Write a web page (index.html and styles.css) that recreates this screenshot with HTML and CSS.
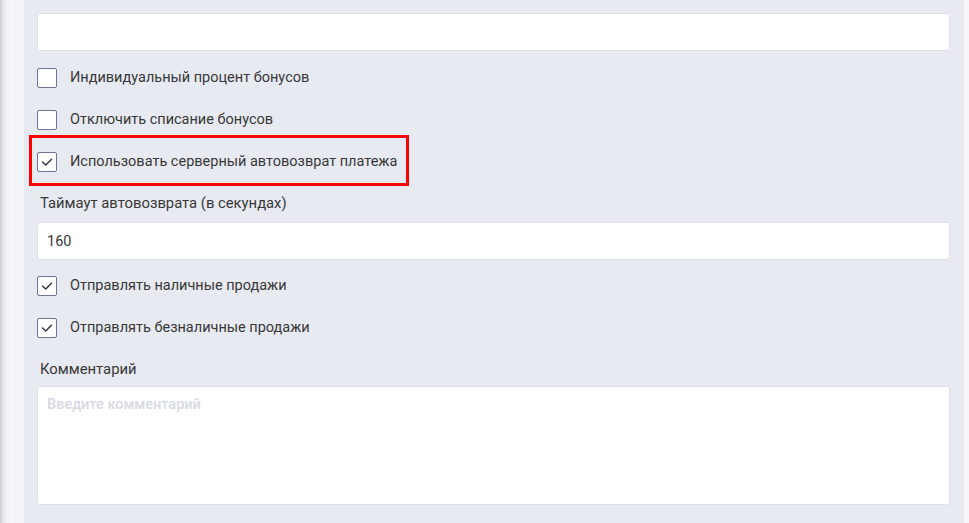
FILE: index.html
```html
<!DOCTYPE html>
<html lang="ru">
<head>
<meta charset="utf-8">
<link rel="stylesheet" href="styles.css">
</head>
<body>
<div class="page">
  <aside class="side"></aside>
  <main class="panel">
    <form class="form">
      <label class="field-label first">Процент бонусов</label>
      <div class="input"></div>

      <div class="check-row">
        <span class="box"></span>
        <span class="check-text">Индивидуальный процент бонусов</span>
      </div>
      <div class="check-row">
        <span class="box"></span>
        <span class="check-text">Отключить списание бонусов</span>
      </div>
      <div class="check-row highlighted">
        <span class="box checked"><svg viewBox="0 0 20 20"><path d="M5 10 L8.6 13.3 L15 7"/></svg></span>
        <span class="check-text">Использовать серверный автовозврат платежа</span>
        <span class="highlight"></span>
      </div>

      <label class="field-label timeout">Таймаут автовозврата (в секундах)</label>
      <div class="input"><span class="value">160</span></div>

      <div class="check-row after-input">
        <span class="box checked"><svg viewBox="0 0 20 20"><path d="M5 10 L8.6 13.3 L15 7"/></svg></span>
        <span class="check-text">Отправлять наличные продажи</span>
      </div>
      <div class="check-row">
        <span class="box checked"><svg viewBox="0 0 20 20"><path d="M5 10 L8.6 13.3 L15 7"/></svg></span>
        <span class="check-text">Отправлять безналичные продажи</span>
      </div>

      <label class="field-label comment">Комментарий</label>
      <div class="textarea"><span class="placeholder">Введите комментарий</span></div>
    </form>
  </main>
  <aside class="side-right"></aside>
</div>
</body>
</html>
```
FILE: styles.css
```css
*, *::before, *::after {
  box-sizing: border-box;
}
html, body {
  margin: 0;
  padding: 0;
  height: 100%;
  overflow: hidden;
}
body {
  font-family: Roboto, "Noto Sans", "Liberation Sans", sans-serif;
  font-size: 14.5px;
  color: #383838;
  background: #f4f5fa;
}
.page {
  display: flex;
  height: 523px;
}
.side {
  width: 24px;
  flex: none;
  background: linear-gradient(to right, #c9cacf 0px, #e4e5ea 3px, #f1f2f7 7px, #f4f5fa 10px);
}
.side-right {
  width: 5px;
  flex: none;
  background: #f5f6fb;
}
.panel {
  flex: 1;
  background: #e8eaf1;
  padding: 0 14px 0 13px;
  overflow: hidden;
}
.form {
  display: flex;
  flex-direction: column;
  margin-top: -16px;
}
.field-label {
  display: block;
  font-size: 14.8px;
  line-height: 17px;
  padding-left: 3px;
  margin-bottom: 12px;
  color: #383838;
}
.field-label.timeout {
  margin-bottom: 10px;
}
.field-label.comment {
  margin-top: 23px;
  margin-bottom: 8px;
}
.input {
  height: 38px;
  background: #fff;
  border: 1px solid #dfe1e9;
  border-radius: 3px;
  display: flex;
  align-items: center;
  padding-left: 9px;
}
.value {
  color: #383838;
}
.check-row {
  position: relative;
  display: flex;
  align-items: center;
  height: 20px;
  margin-top: 22px;
}
.input + .check-row {
  margin-top: 17px;
}
.check-row.after-input {
  margin-top: 16px;
}
.check-row.highlighted + .field-label {
  margin-top: 23px;
}
.box {
  width: 20px;
  height: 20px;
  flex: none;
  border: 1px solid #6e7596;
  border-radius: 2px;
  background: #fff;
  display: flex;
  align-items: center;
  justify-content: center;
}
.box svg {
  width: 18px;
  height: 18px;
}
.box svg path {
  fill: none;
  stroke: #2f3340;
  stroke-width: 1.6;
  stroke-linecap: round;
  stroke-linejoin: round;
}
.check-text {
  margin-left: 13px;
  line-height: 20px;
  white-space: nowrap;
}
.highlight {
  position: absolute;
  left: -8px;
  top: -17px;
  width: 380px;
  height: 51px;
  border: 3px solid #fe0000;
  pointer-events: none;
}
.textarea {
  height: 119px;
  background: #fff;
  border: 1px solid #dfe1e9;
  border-radius: 3px;
  padding: 9px 9px;
}
.placeholder {
  color: #d7dae4;
  font-weight: 500;
}
```
